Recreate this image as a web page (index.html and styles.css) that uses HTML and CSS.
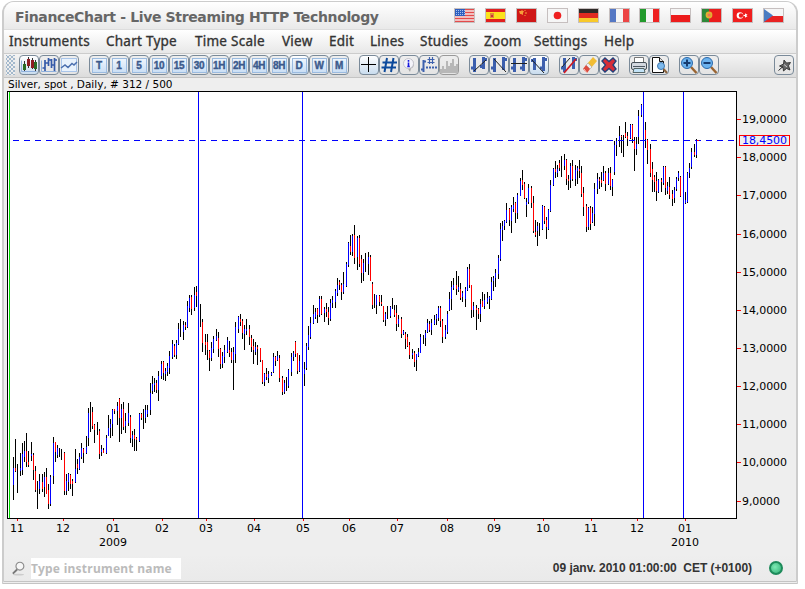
FILE: index.html
```html
<!DOCTYPE html>
<html lang="en">
<head>
    <meta charset="UTF-8">
    <title>FinanceChart - Live Streaming HTTP Technology</title>
    <link rel="stylesheet" href="styles.css">
</head>
<body>
    <div class="window">
        <div class="titlebar">
            <h1>FinanceChart - Live Streaming HTTP Technology</h1>
            <div class="flags">
                <svg class="flag" viewBox="0 0 19 13"><rect width="19" height="13" fill="#f6e4e4"/><path d="M0 .5h19M0 3.5h19M0 6.5h19M0 9.5h19M0 12.5h19" stroke="#e44b4b" stroke-width="1.4"/><rect width="10" height="7" fill="#2e5fc0"/><path d="M1 1.5h9M1 3.5h9M1 5.5h9" stroke="#a9c2ec" stroke-dasharray="1 1"/></svg>
                <svg class="flag" viewBox="0 0 19 13"><rect width="19" height="13" fill="#e11f1f"/><rect y="3" width="19" height="7" fill="#fbe21c"/><rect x="4" y="4" width="4" height="5" fill="#e08a3c"/><rect x="5" y="6" width="2" height="2" fill="#c33"/></svg>
                <svg class="flag" viewBox="0 0 19 13"><rect width="19" height="13" fill="#cf1717"/><path d="M2 2h2l1-1 1 1h1L6 4v2L4 5 3 5z" fill="#f6a03a"/><path d="M8 1v1M9 3v2M8 6v1" stroke="#f6a03a"/></svg>
                <svg class="flag" viewBox="0 0 19 13"><rect width="19" height="13" fill="#f6f6f6"/><circle cx="9.5" cy="6.5" r="3.8" fill="#ef2020"/></svg>
                <svg class="flag" viewBox="0 0 19 13"><rect width="19" height="5" fill="#2d2926"/><rect y="4" width="19" height="5" fill="#e02b20"/><rect y="9" width="19" height="4" fill="#f8c92a"/></svg>
                <svg class="flag" viewBox="0 0 19 13"><rect width="7" height="13" fill="#5578c4"/><rect x="6" width="7" height="13" fill="#f5f5f5"/><rect x="13" width="6" height="13" fill="#ec4545"/></svg>
                <svg class="flag" viewBox="0 0 19 13"><rect width="7" height="13" fill="#229a2c"/><rect x="6" width="7" height="13" fill="#f5f5f5"/><rect x="13" width="6" height="13" fill="#ee2222"/></svg>
                <svg class="flag" viewBox="0 0 19 13"><rect width="19" height="7" fill="#f5f5f5"/><rect y="6" width="19" height="7" fill="#ec1c1c"/></svg>
                <svg class="flag" viewBox="0 0 19 13"><rect width="7" height="13" fill="#2e8838"/><rect x="7" width="12" height="13" fill="#ea1d1d"/><circle cx="7" cy="6" r="3.4" fill="#e2ad31"/><circle cx="7" cy="6" r="1.5" fill="#e97658"/></svg>
                <svg class="flag" viewBox="0 0 19 13"><rect width="19" height="13" fill="#ef1e1e"/><circle cx="7" cy="6.5" r="3.3" fill="#fff"/><circle cx="8" cy="6.5" r="2.2" fill="#ef1e1e"/><path d="M10 6.5l2-.8V4l1 1.3 1.5-.3-1 1.5 1 1.5-1.5-.3L12 9V7.3z" fill="#fff"/></svg>
                <svg class="flag" viewBox="0 0 19 13"><rect width="19" height="7" fill="#f5f5f5"/><rect y="7" width="19" height="6" fill="#e82222"/><path d="M0 0l9 6.5-9 6.5z" fill="#4a7cc2"/></svg>
            </div>
        </div>

        <div class="menubar">
            <span class="m-instruments">Instruments</span>
            <span class="m-chart">Chart Type</span>
            <span class="m-time">Time Scale</span>
            <span class="m-view">View</span>
            <span class="m-edit">Edit</span>
            <span class="m-lines">Lines</span>
            <span class="m-studies">Studies</span>
            <span class="m-zoom">Zoom</span>
            <span class="m-settings">Settings</span>
            <span class="m-help">Help</span>
        </div>

        <div class="toolbar">
            <div class="grip"></div>
            <div class="group">
                <div class="btn active"><svg viewBox="0 0 18 18"><path d="M1.500 4.500v11h15" fill="none" stroke="#8fb0dc"/><path d="M4.500 5v10M8.500 1v11M12.500 2v11M15.500 4v11" stroke="#333"/><path d="M3 8h3v6H3zM14 6h3v7h-3z" fill="#2a6b24"/><path d="M7 3h3v7H7zM11 4h3v8h-3z" fill="#8e1c22"/></svg></div>
                <div class="btn"><svg viewBox="0 0 18 18"><path d="M1.500 4.500v11h15" fill="none" stroke="#8fb0dc"/><path d="M5 4v11M2.500 12H5M5 7h3M8.500 2v8M8 4h3M11.500 3v9M14.500 2v13M11.500 9h3M14 4h3" fill="none" stroke="#3459a8" stroke-width="1.700"/></svg></div>
                <div class="btn"><svg viewBox="0 0 18 18"><rect x="1.500" y="2.500" width="15" height="13" fill="#e9f2fc" stroke="#a9c5ea"/><path d="M1 12l4-3 3 2.500 4-4 2 1.500 3-3" fill="none" stroke="#4b6fae" stroke-width="1.500"/></svg></div>
            </div>
            <div class="group">
                <div class="btn"><b>T</b></div>
                <div class="btn"><b>1</b></div>
                <div class="btn"><b>5</b></div>
                <div class="btn"><b>10</b></div>
                <div class="btn"><b>15</b></div>
                <div class="btn"><b>30</b></div>
                <div class="btn"><b>1H</b></div>
                <div class="btn"><b>2H</b></div>
                <div class="btn"><b>4H</b></div>
                <div class="btn"><b>8H</b></div>
                <div class="btn active"><b>D</b></div>
                <div class="btn"><b>W</b></div>
                <div class="btn"><b>M</b></div>
            </div>
            <div class="group">
                <div class="btn active"><svg viewBox="0 0 18 18"><path d="M1 8.500h15M8.500 1v15" stroke="#000"/></svg></div>
                <div class="btn"><svg viewBox="0 0 18 18"><path d="M7 2L4.500 16M13.500 2L11 16M2.500 6.500H17M1.500 11.500H16" stroke="#0d4a9c" stroke-width="2"/></svg></div>
                <div class="btn"><svg viewBox="0 0 18 18"><path d="M9 3a5 5 0 015 5 5 5 0 01-3 4.500l-1 3.500-2-3.200A5 5 0 019 3z" fill="#a6a6a6"/><circle cx="8.500" cy="7.500" r="5" fill="#f4f4fa" stroke="#c5c5ce"/><path d="M8.500 4v1.700M8.500 6.500v4M7.300 10.500h2.500" stroke="#1717dd" stroke-width="1.600"/></svg></div>
                <div class="btn"><svg viewBox="0 0 18 18"><path d="M3.500 4v12M1 13.500h3M3 5.500h3" stroke="#3c60ae" stroke-width="2"/><path d="M9.500 1v7M12.500 1v7M7.500 3.500h7M7.500 6.500h7" stroke="#3c60ae" stroke-width="1.200"/><path d="M6 11.500h11" stroke="#3c60ae" stroke-width="2" stroke-dasharray="2 1"/></svg></div>
                <div class="btn off"><svg viewBox="0 0 18 18"><path d="M0 17v-4h2v-3h2v3h2V5h2v5h2V7h2V3h2v7h2V8h2v9z" fill="#b7b7b7"/></svg></div>
            </div>
            <div class="group">
                <div class="btn"><svg viewBox="0 0 18 18"><path class="bars" d="M4.500 2v14M1 12h4M13.500 1v12M10 10.500h4M13 3.500h4"/><path d="M4 15L16 4" stroke="#222"/></svg></div>
                <div class="btn"><svg viewBox="0 0 18 18"><path class="bars" d="M4.500 2v14M1 12h4M13.500 1v13M13 3.500h4"/><path d="M4 3l12 13" stroke="#222"/></svg></div>
                <div class="btn"><svg viewBox="0 0 18 18"><path class="bars" d="M4.500 2v14M1 12h4M13.500 1v14M10 12h4M13 3.500h4"/><path d="M1 7.500h16" stroke="#222"/></svg></div>
                <div class="btn active"><svg viewBox="0 0 18 18"><path class="bars" d="M4.500 2v12M1 4.500h4M13.500 1v14M10 12h4M13 3.500h4"/><path d="M2 4l12 13" stroke="#222"/></svg></div>
            </div>
            <div class="group">
                <div class="btn"><svg viewBox="0 0 18 18"><path class="bars" d="M4.500 2v14M1 12h4M13.500 1v12M13 3.500h4"/><path d="M2 11L10 2" stroke="#222"/><path d="M4 17L16 3" stroke="#cf1822" stroke-width="1.700"/></svg></div>
                <div class="btn"><svg viewBox="0 0 18 18"><path d="M13 1l4 4-6 7-4-4z" fill="#f1bd35"/><path d="M8 7l4 4-2 2-4-4z" fill="#eee" stroke="#999" stroke-width=".5"/><path d="M6 9l4 4-3 4-4-4z" fill="#dc4b3e"/><path d="M4 13l3 4" stroke="#f5c5c0"/></svg></div>
                <div class="btn"><svg viewBox="0 0 18 18"><path d="M5 2l4 3.500L13 2l3 3-3 4 3 4-3 3-4-3.500L5 16l-3-3 3.500-4L2 5z" fill="#d62c38" stroke="#233f79" stroke-width="1.400"/></svg></div>
            </div>
            <div class="group">
                <div class="btn"><svg viewBox="0 0 18 18"><path d="M4.500 7V1.500h9V7" fill="#fff" stroke="#777"/><rect x="1.500" y="6.500" width="15" height="7" rx="1.500" fill="#d3d8df" stroke="#465058"/><path d="M3 10.500h12" stroke="#4d5963"/><path d="M4 12.500h10l1 4H3z" fill="#c2e2f7" stroke="#566"/></svg></div>
                <div class="btn"><svg viewBox="0 0 18 18"><path d="M2.500 1.500h7l4 4v11h-11z" fill="#fff" stroke="#111"/><path d="M9.500 1.500v4h4" fill="#ddd" stroke="#111"/><circle cx="11" cy="10" r="3.500" fill="#7cb9ed" stroke="#4178ae"/><path d="M13.500 13l3.500 4" stroke="#8b643e" stroke-width="2"/></svg></div>
            </div>
            <div class="group">
                <div class="btn"><svg viewBox="0 0 18 18"><path d="M11 11l5.500 6" stroke="#9a6533" stroke-width="2.500"/><circle cx="7" cy="7" r="5.500" fill="#6bb2ee" stroke="#2a69ab"/><path d="M3.500 7h7M7 3.500v7" stroke="#173c70" stroke-width="2"/></svg></div>
                <div class="btn"><svg viewBox="0 0 18 18"><path d="M11 11l5.500 6" stroke="#9a6533" stroke-width="2.500"/><circle cx="7" cy="7" r="5.500" fill="#6bb2ee" stroke="#2a69ab"/><path d="M3.500 7h7" stroke="#173c70" stroke-width="2"/></svg></div>
            </div>
            <div class="group pin">
                <div class="btn"><svg viewBox="0 0 18 18"><path d="M9 4l2.500 3 4-.5-2 3.200 1.500 4.300-3.500-1.500L8.500 15 8 11.500 4.500 10l4-2z" fill="#666" stroke="#222" stroke-width=".8"/><path d="M8 10.500l-4.500 4" stroke="#222"/><path d="M9 8.500l3 2.500" stroke="#ccc"/></svg></div>
            </div>
        </div>

        <div class="caption">Silver, spot , Daily, # 312 / 500</div>
        <svg id="chart" class="chart" width="792" height="464" viewBox="4 90 792 464"></svg>

        <div class="statusbar">
            <svg class="search-icon" viewBox="0 0 16 16"><ellipse cx="8" cy="14.500" rx="6" ry="1" fill="#ccc"/><path d="M7 8.500l-5 5" stroke="#777" stroke-width="2"/><circle cx="9.500" cy="5.500" r="4.200" fill="#f6f6f6" stroke="#8a8a8a" stroke-width="1.200"/></svg>
            <input class="search" type="text" placeholder="Type instrument name">
            <span class="clock">09 janv. 2010 01:00:00 &nbsp;CET (+0100)</span>
            <span class="led"></span>
        </div>
    </div>
    <script src="chart.js"></script>
</body>
</html>
```
FILE: styles.css
```css
/* Global styles */
body {
    margin: 0;
    background-color: #fff;
    font-family: "DejaVu Sans", Verdana, sans-serif;
    color: #333;
}

.window {
    box-sizing: border-box;
    width: 796px;
    height: 583px;
    margin: 1px 0 0 2px;
    border: 2px solid #ccc;
    border-top-width: 1px;
    border-bottom: 3px double #c4c4c4;
    border-radius: 12px 12px 0 0;
    background-color: #eee;
    overflow: hidden;
    display: flex;
    flex-direction: column;
}

/* Title */
.titlebar {
    box-sizing: border-box;
    height: 28px;
    flex: none;
    display: flex;
    align-items: center;
    justify-content: space-between;
    padding: 0 12px 0 11px;
    background: linear-gradient(#fff, #e9e9e9);
    border-bottom: 1px solid #ddd;
}

.titlebar h1 {
    margin: 3px 0 0;
    font-size: 14px;
    line-height: 18px;
    letter-spacing: -0.35px;
    color: #666;
    white-space: nowrap;
}

.flags {
    display: flex;
    gap: 9.9px;
}

.flag {
    box-sizing: border-box;
    width: 21px;
    height: 15px;
    border: 1px solid #c6bfbf;
}

/* Menu */
.menubar {
    box-sizing: border-box;
    height: 24px;
    flex: none;
    display: flex;
    padding-left: 5px;
    background: linear-gradient(#fff, #e8e8e8);
    border-bottom: 1px solid #ccc;
    font-family: "Noto Sans", sans-serif;
    font-size: 13.5px;
    line-height: 22px;
    letter-spacing: 0.25px;
    -webkit-text-stroke: 0.35px #333;
    white-space: nowrap;
}

.m-instruments { width: 97px; }
.m-chart { width: 89px; }
.m-time { width: 87px; }
.m-view { width: 47px; }
.m-edit { width: 41px; }
.m-lines { width: 50px; }
.m-studies { width: 64px; }
.m-zoom { width: 50px; }
.m-settings { width: 70px; }

/* Toolbar */
.toolbar {
    box-sizing: border-box;
    height: 24px;
    flex: none;
    display: flex;
    gap: 10px;
    padding: 1px 2px 0;
    background: linear-gradient(#f4f4f4, #dcdcdc);
    border-bottom: 1px solid #c4c4c4;
}

.grip {
    width: 9px;
    height: 20px;
    margin-right: -6px;
    background-color: #eee;
    background-image: radial-gradient(#a3b8cc 0.8px, transparent 1px), radial-gradient(#a3b8cc 0.8px, transparent 1px);
    background-size: 4px 4px;
    background-position: 0 0, 2px 2px;
}

.group {
    display: flex;
}

.pin {
    margin-left: auto;
}

.btn {
    box-sizing: border-box;
    width: 20px;
    height: 20px;
    border: 1px solid #7a8a99;
    border-radius: 4px;
    background: linear-gradient(#eee, #e4e4e4);
    display: flex;
    align-items: center;
    justify-content: center;
}

.btn.active {
    background: linear-gradient(#fff, #c9dcee);
}

.btn.off {
    border-color: #999;
}

.btn svg {
    width: 18px;
    height: 18px;
}

.btn b {
    box-sizing: border-box;
    width: 15px;
    height: 15px;
    border: 1px solid #9bbbe0;
    background: linear-gradient(#eef5fd, #cbdff5);
    color: #3c5a8c;
    font-family: "Liberation Sans", Arial, sans-serif;
    font-size: 10px;
    line-height: 13px;
    letter-spacing: -0.3px;
    display: flex;
    justify-content: center;
    -webkit-text-stroke: 0.4px #3c5a8c;
}

.bars {
    fill: none;
    stroke: #3c5fae;
    stroke-width: 3;
}

/* Chart */
.caption {
    height: 12px;
    flex: none;
    padding: 0 4px;
    font-size: 10.5px;
    line-height: 13px;
    color: #000;
    white-space: pre;
}

.chart {
    flex: none;
    display: block;
    shape-rendering: crispEdges;
    font-size: 11px;
}

/* Status bar */
.statusbar {
    flex: 1;
    display: flex;
    align-items: center;
    padding: 1px 13px 0 7px;
    background: linear-gradient(#eee, #eaeaea);
}

.search-icon {
    width: 15px;
    height: 15px;
}

.search {
    box-sizing: border-box;
    width: 150px;
    height: 21px;
    margin-left: 5px;
    padding: 0;
    border: none;
    background-color: #fff;
    font-family: "Noto Sans", sans-serif;
    font-size: 12px;
    font-weight: bold;
    letter-spacing: 0.25px;
}

.search::placeholder {
    color: #bbb;
}

.clock {
    margin-left: auto;
    margin-right: 17px;
    font-family: "Liberation Sans", Arial, sans-serif;
    font-size: 12px;
    font-weight: bold;
    letter-spacing: -0.03px;
}

.led {
    box-sizing: border-box;
    width: 14px;
    height: 14px;
    border: 2px solid #1d8a5a;
    border-radius: 50%;
    background: radial-gradient(circle at 40% 40%, #7eeab4, #2fae74);
}
```
FILE: chart.js
```js
// Each bar: x, high, low, open/close span (u = up, d = down)
const bars = `
13 457 500 468 485 u;15 439 472 468 471 d;17 464 493;20 453 476 468 471 u;22 443 475 454 470 u;24 441 462 451 457 u;26 433 467 451 462 d;28 451 467 462 465 d;31 442 461 454 456 u;33 453 480 455 470 d;35 466 492 471 490 d;37 481 509;39 474 494 481 489 u;42 474 492 482 489 d;44 472 497 477 487 u;46 468 494 477 494 d;48 484 509 490 504 d;50 475 506 477 504 u;53 437 484 443 476 u;55 442 462 442 452 d;57 445 458 448 455 u;59 448 457;61 449 460;64 452 495 453 491 d;66 474 495 481 491 u;68 473 491 474 482 u;70 474 489 475 484 d;72 479 496 481 484 d;75 449 483 469 482 u;77 459 474 464 468 d;79 453 470 457 469 u;81 443 459 448 457 u;83 448 463 449 453 d;86 436 454 447 453 u;88 408 446 413 438 u;90 402 432;92 407 429 412 426 d;94 424 443 425 430 d;97 422 435;99 429 459 431 454 d;101 445 456 449 452 u;103 448 453 450 453 d;
106 435 454 438 453 u;108 415 436 428 436 u;110 419 438 424 428 u;112 409 436 410 424 u;114 409 414 409 411 d;117 402 425 406 411 u;119 398 442 399 418 d;121 404 434 409 418 u;123 402 430 409 427 d;125 413 433 421 426 u;128 403 426 413 423 u;130 415 443 417 438 d;132 431 447 435 439 u;134 429 451 435 439 d;136 437 451 438 440 d;139 413 442 414 441 u;141 413 420 414 418 d;143 409 429;145 405 423 410 418 u;147 405 417 410 414 u;150 383 415 393 410 u;152 376 394 384 391 u;154 378 392 383 385 u;156 380 393 383 390 d;158 371 401 376 390 u;161 361 379 364 376 u;163 361 380 362 373 d;165 368 381 371 374 u;167 363 376 366 372 u;169 351 374 356 368 u;172 340 359 344 357 u;174 344 357 346 355 d;176 340 359 343 355 u;178 323 345 329 344 u;180 319 337;183 321 340 325 332 u;185 322 330 325 327 d;187 301 328 306 327 u;189 295 312 298 308 u;191 295 315 297 309 d;194 287 311 295 308 u;196 286 307 292 296 d;
200 304 327;202 319 352 322 343 d;205 334 355 342 345 d;207 334 360 342 350 d;209 350 371 351 358 d;211 342 361 348 358 u;213 336 353 339 349 u;216 329 341 336 340 u;218 332 357 338 349 d;220 348 369 349 364 d;222 352 368 356 364 u;224 345 363 350 357 u;227 337 353 340 352 u;229 341 357 350 353 d;231 348 363 352 360 d;233 347 390 352 360 u;235 322 363 327 354 u;238 316 333 317 329 u;240 314 326 319 322 d;242 319 339 321 333 d;244 325 350 329 334 u;246 319 335 329 331 u;249 325 345 329 337 d;251 335 352 338 347 d;253 339 364 346 350 d;255 342 355 347 352 u;257 345 365 347 349 d;260 348 362 348 360 d;262 360 384 360 382 d;264 373 386 374 382 u;266 368 380 374 377 d;268 371 383 374 378 u;271 372 376 373 375 u;273 353 373 357 372 u;275 356 366 357 361 d;277 351 361 356 360 u;279 355 382 358 378 d;282 376 395 378 392 d;284 380 394 383 392 u;286 377 391;288 369 388 370 386 u;291 353 376 357 372 u;293 351 361 353 357 u;295 341 357 342 354 d;297 353 374 353 371 d;299 355 372 361 371 u;
304 362 386 369 374 u;306 343 370 346 368 u;308 326 350 335 347 u;310 317 339 323 337 u;313 305 324 314 323 u;315 308 319 312 317 u;317 308 323 309 315 d;319 296 317 299 315 u;321 296 315 299 314 d;324 307 322 309 313 u;326 303 317 309 312 d;328 307 325 312 318 d;330 299 321 303 319 u;332 296 308 300 303 u;335 289 308 291 302 u;337 278 296 285 293 u;339 280 290 282 285 d;341 283 300 285 292 d;343 272 294 284 292 u;346 262 287 264 286 u;348 242 267 243 265 u;350 235 255 246 252 d;352 234 256 236 252 u;354 225 264 235 258 d;357 236 270 238 257 u;359 235 267 238 264 d;361 255 283 259 273 d;363 259 281 263 273 u;365 253 272;368 252 275 257 264 u;370 255 281 257 281 d;372 282 309 284 305 d;374 294 308;376 295 314 295 305 u;379 295 306 296 302 d;381 295 306 302 304 d;383 306 322 306 320 d;385 312 326 314 320 u;387 306 319;390 306 318 307 316 u;392 298 309;394 305 317 310 315 d;396 305 331 313 324 d;398 315 327 319 324 u;401 317 338 319 334 d;403 330 335 331 334 u;405 332 349 334 339 d;407 334 347 337 346 d;409 342 359 345 355 d;
412 349 359 353 355 u;414 351 367 353 362 d;416 354 371 354 360 u;418 348 357 352 356 u;420 334 353 337 353 u;423 335 344;425 330 346 333 338 u;427 319 333 323 332 u;429 321 332 324 330 d;431 319 335 323 330 u;434 315 325 320 324 u;436 314 325 315 319 u;438 306 321 308 318 u;440 306 327 308 321 d;442 319 343 321 337 d;445 325 339 330 337 u;447 311 334 314 332 u;449 292 311 299 310 u;451 281 310 287 299 u;453 278 290 285 288 u;456 271 295 285 289 d;458 276 292 287 290 u;460 283 300 289 298 d;462 291 302 293 297 u;465 287 307 289 299 u;467 267 291 269 290 u;469 264 288 269 285 d;471 285 318 285 310 d;473 302 317 306 310 u;476 305 330 308 310 d;478 308 319 309 314 d;480 299 322 304 314 u;482 292 307 301 307 d;484 294 309 300 306 u;487 292 304 298 302 u;489 296 309 297 299 u;491 277 300 282 299 u;493 276 291 278 281 u;495 269 287 273 278 u;498 255 279 258 274 u;500 223 261 229 259 u;502 221 241 226 230 u;504 220 230 221 226 u;506 203 223 210 222 u;509 208 226 209 220 d;511 205 233 207 221 u;513 197 212 205 209 u;515 202 223 203 213 d;517 193 219 195 213 u;
520 178 196 181 196 u;522 170 190 180 185 d;524 182 199 184 198 d;526 198 217 202 205 u;528 184 204 188 202 u;531 186 208 188 203 d;533 196 233 203 231 d;535 220 237 232 235 d;537 222 246 226 231 u;539 223 236;542 205 230 206 229 u;544 206 224 207 221 d;546 217 239 220 227 d;548 209 230 210 229 u;550 180 212 185 211 u;553 168 186 169 185 u;555 161 178 169 172 d;557 165 177 169 173 u;559 160 171 163 168 d;561 156 177;564 154 170 160 166 u;566 159 185 160 179 d;568 175 190 179 181 d;570 163 188 166 180 u;572 160 181 166 179 d;575 165 186 170 179 u;577 166 184 168 171 u;579 160 178 169 171 d;581 166 197 173 194 d;583 187 216 193 207 d;586 204 232 206 227 d;588 207 230 208 227 u;590 206 230 208 224 d;592 207 223 213 222 u;594 183 226 189 214 u;597 173 194 179 189 u;599 177 189 179 181 d;601 172 187 180 183 d;603 166 181 173 180 u;605 171 191 173 184 d;608 168 185 173 184 u;610 167 190 173 186 d;612 179 196 180 187 u;614 141 175 145 172 u;616 138 156 141 145 u;619 126 147 136 140 u;621 135 153 136 137 d;623 135 157;625 122 138 133 137 d;627 132 146 136 139 d;630 124 139 125 138 u;632 124 143 125 139 d;634 137 171 140 149 d;636 137 155 144 149 u;638 110 144 116 137 u;641 104 117 105 115 u;
645 122 148 130 139 d;647 139 164 140 150 d;650 144 177 149 173 d;652 162 192 169 180 d;654 175 192 177 182 d;656 172 201 181 191 d;658 179 193 180 192 u;661 178 192 180 182 d;663 166 185 167 183 u;665 166 195 167 188 d;667 182 194 186 191 u;669 177 199 187 195 d;672 190 206 194 199 d;674 187 203 190 198 u;676 177 191 179 189 u;678 171 181 173 178 u;680 176 197 177 196 d;685 192 204 200 203 u;687 172 203 173 202 u;689 163 178 168 173 u;691 148 169 152 167 u;694 144 157 152 155 d;696 139 158 140 155 u`;

const chart = document.getElementById("chart");
let out = "";

function rect(x, y, w, h, color) {
    out += `<rect x="${x}" y="${y}" width="${w}" height="${h}" fill="${color}"/>`;
}

function label(x, y, str, width, color, anchor) {
    out += `<text x="${x}" y="${y}" fill="${color}" text-anchor="${anchor}" textLength="${width}">${str}</text>`;
}

// Plot area
rect(7, 91, 730, 428, "#000");
rect(8, 92, 728, 426, "#fff");
rect(9, 92, 1, 426, "#00dd00");

bars.split(";").forEach(function(item) {
    const b = item.trim().split(" ");
    rect(+b[0], +b[1], 1, b[2] - b[1], "#000");
    if (b.length > 3) {
        rect(+b[0], +b[3], 1, b[4] - b[3], b[5] === "u" ? "#0000ff" : "#ff0000");
    }
});

[198, 302, 643, 683].forEach(x => rect(x, 92, 1, 426, "#0000ff"));

// Last price line
out += '<path d="M13 140.500H736" stroke="#0000ff" stroke-dasharray="6 5"/>';
rect(697, 140, 2, 1, "#ff0000");

// Price scale
[119, 157, 195, 234, 272, 310, 348, 386, 424, 462, 501].forEach(function(y, i) {
    rect(737, y, 4, 1, "#ff0000");
    const price = 19 - i;
    label(742, y + 4, price + ",0000", price > 9 ? 45 : 38, "#000", "start");
});
out += '<rect x="739.500" y="135.500" width="50" height="10" fill="#eee" stroke="#ff0000"/>';
label(742, 144, "18,4500", 45, "#0000ff", "start");

// Time scale
const months = ["11", "12", "01", "02", "03", "04", "05", "06", "07", "08", "09", "10", "11", "12", "01"];
[17, 63, 113, 162, 206, 254, 303, 349, 397, 447, 494, 543, 591, 637, 685].forEach(function(x, i) {
    rect(x, 519, 1, 2, "#ff0000");
    label(x, 532, months[i], 14, "#000", "middle");
});
label(113, 546, "2009", 28, "#000", "middle");
label(685, 546, "2010", 28, "#000", "middle");

chart.innerHTML = out;
```
